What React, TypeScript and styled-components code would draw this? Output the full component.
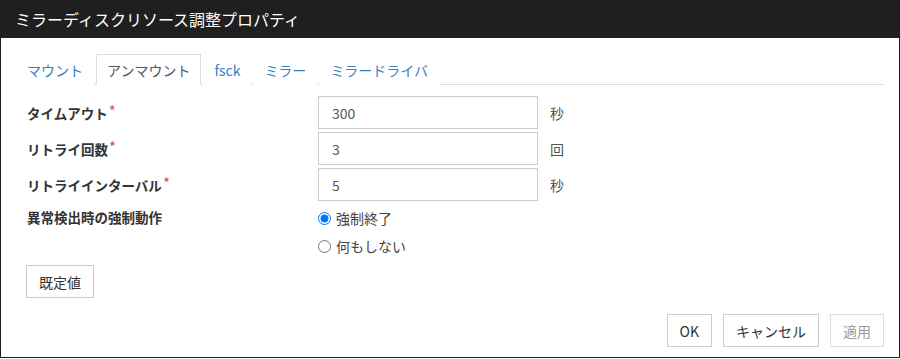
import React from "react";
import styled, { createGlobalStyle } from "styled-components";

const Global = createGlobalStyle`
  html, body { margin: 0; padding: 0; background: #ffffff; }
  body { font-family: "Noto Sans CJK JP", "Noto Sans", sans-serif; }
  * { box-sizing: border-box; }
`;

const Window = styled.div`
  width: 900px;
  height: 358px;
  display: flex;
  flex-direction: column;
  border-left: 1px solid #1f1f1f;
  border-right: 1px solid #1f1f1f;
  border-bottom: 1px solid #1f1f1f;
  background: #fff;
`;

const TitleBar = styled.div`
  height: 38px;
  flex: none;
  background: #1f1f1f;
  color: #ffffff;
  font-size: 16px;
  line-height: 38px;
  padding-left: 15px;
  margin: 0 -1px;
`;

const Body = styled.div`
  flex: 1;
  display: flex;
  flex-direction: column;
  padding: 16px 15px 0 15px;
`;

const Tabs = styled.div`
  display: flex;
  border-bottom: 1px solid #dddddd;
  height: 31px;
`;

const Tab = styled.div<{ $active?: boolean }>`
  height: 31px;
  margin-right: 2px;
  margin-bottom: -1px;
  padding: 0 10px;
  font-size: 14px;
  line-height: 30px;
  color: ${(p) => (p.$active ? "#555555" : "#3680c0")};
  background: #fff;
  border: 1px solid ${(p) => (p.$active ? "#dddddd" : "transparent")};
  border-bottom-color: ${(p) => (p.$active ? "#ffffff" : "transparent")};
  white-space: nowrap;
`;

const Form = styled.div`
  display: flex;
  flex-direction: column;
  gap: 3px;
  padding: 11px 0 0 11px;
`;

const Row = styled.div<{ $top?: boolean }>`
  display: grid;
  grid-template-columns: 279px 220px auto;
  column-gap: 12px;
  align-items: ${(p) => (p.$top ? "start" : "center")};
`;

const Label = styled.div`
  font-size: 13.5px;
  font-weight: 700;
  color: #333333;
  line-height: 26px;
  white-space: nowrap;
`;

const Req = styled.span`
  color: #d9534f;
  font-weight: 400;
  font-size: 15px;
  line-height: 0;
  vertical-align: 2px;
  margin-left: 1px;
`;

const Input = styled.input`
  width: 220px;
  height: 33px;
  border: 1px solid #cccccc;
  padding: 0 13px;
  font-family: inherit;
  font-size: 14px;
  color: #555555;
  background: #fff;
  outline: none;
`;

const Unit = styled.span`
  font-size: 14px;
  color: #555555;
`;

const RadioGroup = styled.div`
  display: flex;
  flex-direction: column;
`;

const RadioItem = styled.label`
  display: flex;
  align-items: center;
  height: 28px;
  font-size: 14px;
  color: #444444;
  gap: 5px;
`;

const Radio = styled.input`
  width: 13px;
  height: 13px;
  margin: 0;
  accent-color: #0075ff;
`;

const Button = styled.button<{ $disabled?: boolean }>`
  height: 33px;
  padding: 0 12px;
  border: 1px solid ${(p) => (p.$disabled ? "#dddddd" : "#cccccc")};
  background: #ffffff;
  font-family: inherit;
  font-size: 14px;
  color: ${(p) => (p.$disabled ? "#999999" : "#333333")};
`;

const DefaultRow = styled.div`
  padding: 5px 0 0 10px;
`;

const Footer = styled.div`
  display: flex;
  justify-content: flex-end;
  gap: 11px;
  margin-top: 16px;
`;

export default function App() {
  return (
    <>
      <Global />
      <Window>
        <TitleBar>ミラーディスクリソース調整プロパティ</TitleBar>
        <Body>
          <Tabs>
            <Tab>マウント</Tab>
            <Tab $active>アンマウント</Tab>
            <Tab>fsck</Tab>
            <Tab>ミラー</Tab>
            <Tab>ミラードライバ</Tab>
          </Tabs>
          <Form>
            <Row>
              <Label>
                タイムアウト<Req>*</Req>
              </Label>
              <Input defaultValue="300" />
              <Unit>秒</Unit>
            </Row>
            <Row>
              <Label>
                リトライ回数<Req>*</Req>
              </Label>
              <Input defaultValue="3" />
              <Unit>回</Unit>
            </Row>
            <Row>
              <Label>
                リトライインターバル<Req>*</Req>
              </Label>
              <Input defaultValue="5" />
              <Unit>秒</Unit>
            </Row>
            <Row $top>
              <Label>異常検出時の強制動作</Label>
              <RadioGroup>
                <RadioItem>
                  <Radio type="radio" name="act" defaultChecked />
                  強制終了
                </RadioItem>
                <RadioItem>
                  <Radio type="radio" name="act" />
                  何もしない
                </RadioItem>
              </RadioGroup>
            </Row>
          </Form>
          <DefaultRow>
            <Button>既定値</Button>
          </DefaultRow>
          <Footer>
            <Button>OK</Button>
            <Button>キャンセル</Button>
            <Button $disabled>適用</Button>
          </Footer>
        </Body>
      </Window>
    </>
  );
}
